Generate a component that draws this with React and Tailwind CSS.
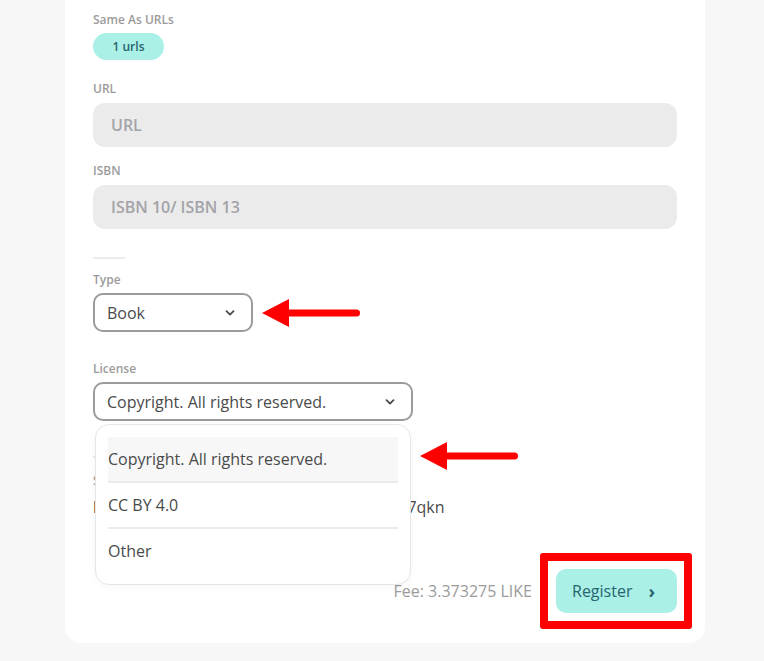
const LABEL = "block text-[12px] leading-[16px] font-semibold text-[#9b9b9b]";

function Chevron({ className }) {
  return (
    <svg width="10" height="6" viewBox="0 0 10 6" className={className} aria-hidden="true">
      <path d="M1.5 1.2 L5 4.6 L8.5 1.2" fill="none" stroke="#4a4a4a" strokeWidth="1.8" strokeLinecap="round" strokeLinejoin="round" />
    </svg>
  );
}

// red annotation arrow pointing left
function RedArrow({ className }) {
  return (
    <svg width="100" height="28" viewBox="0 0 100 28" className={className} aria-hidden="true">
      <path d="M0 14 L27 0 L27 28 Z" fill="#ff0000" />
      <rect x="24" y="10.5" width="74" height="7" rx="3.5" fill="#ff0000" />
    </svg>
  );
}

function TextInput({ placeholder }) {
  return (
    <div className="mt-[6px] flex h-[44px] items-center rounded-[12px] bg-[#ebebeb] px-[18px]">
      <span className="text-[16px] font-semibold text-[#a3a3a8]">{placeholder}</span>
    </div>
  );
}

function Select({ value, width }) {
  return (
    <div
      className={`mt-[5px] flex h-[39px] items-center justify-between rounded-[10px] border-2 border-[#9b9b9b] bg-white pl-[12px] pr-[16px] ${width}`}
    >
      <span className="text-[16px] text-[#4a4a4a]">{value}</span>
      <Chevron />
    </div>
  );
}

const licenses = ["Copyright. All rights reserved.", "CC BY 4.0", "Other"];

export default function App() {
  return (
    <div
      className="min-h-[661px] w-[764px] bg-[#f7f7f7] pl-[65px]"
      style={{ fontFamily: '"Open Sans", "Noto Sans", sans-serif' }}
    >
      <div className="w-[640px] rounded-b-[16px] bg-white px-[28px] pt-[12px] pb-[30px]">
        {/* same as */}
        <span className={LABEL}>Same As URLs</span>
        <div className="mt-[5px] inline-flex h-[27px] w-[71px] items-center justify-center rounded-full bg-[#aaf0e6] text-[12px] font-semibold text-[#28646e]">
          1 urls
        </div>

        <span className={`${LABEL} mt-[21px]`}>URL</span>
        <TextInput placeholder="URL" />

        <span className={`${LABEL} mt-[16px]`}>ISBN</span>
        <TextInput placeholder="ISBN 10/ ISBN 13" />

        <div className="mt-[28px] h-[2px] w-[32px] bg-[#ebebeb]" />

        {/* type */}
        <span className={`${LABEL} mt-[13px]`}>Type</span>
        <div className="relative">
          <Select value="Book" width="w-[160px]" />
          <RedArrow className="absolute left-[169px] top-[6px]" />
        </div>

        {/* license */}
        <span className={`${LABEL} mt-[29px]`}>License</span>
        <div className="relative z-10">
          <Select value="Copyright. All rights reserved." width="w-[320px]" />
          <div className="absolute left-[2px] top-[42px] w-[316px] rounded-[14px] border border-[#e6e6e6] bg-white px-[12px] pt-[12px] pb-[11px] shadow-[0_2px_6px_rgba(0,0,0,0.04)]">
            {licenses.map((l, i) => (
              <div key={l}>
                {i > 0 && <div className="h-[2px] bg-[#ebebeb]" />}
                <div className={`flex h-[44px] items-center text-[16px] text-[#4a4a4a] ${i === 0 ? "bg-[#f7f7f7]" : ""}`}>
                  {l}
                </div>
              </div>
            ))}
          </div>
          <RedArrow className="absolute left-[327px] top-[60px]" />
        </div>

        {/* sender (hidden under dropdown) */}
        <div className="mt-[35px] h-[2px] w-[32px] bg-[#ebebeb]" />
        <span className={`${LABEL} mt-[15px]`}>Sender</span>
        <div className="mt-[6px] text-[16px] leading-[24px] text-[#4a4a4a]">
          like1ckyzxgjwqm0zz3n4f7kp8jyt9r0sve0hd7qkn
        </div>

        {/* footer */}
        <div className="mt-[50px] flex items-center justify-end gap-[24px]">
          <span className="text-[16px] text-[#9b9b9b]">Fee: 3.373275 LIKE</span>
          <div className="relative">
            <button
              type="button"
              className="flex h-[44px] w-[121px] items-center gap-[16px] rounded-[10px] bg-[#aaf0e6] pl-[16px] text-[16px] text-[#28646e]"
            >
              Register
              <span className="text-[18px] font-bold leading-none">›</span>
            </button>
            <div className="pointer-events-none absolute -left-[16px] -top-[16px] -right-[15px] -bottom-[16px] rounded-[3px] border-[8px] border-[#ff0000]" />
          </div>
        </div>
      </div>
    </div>
  );
}
